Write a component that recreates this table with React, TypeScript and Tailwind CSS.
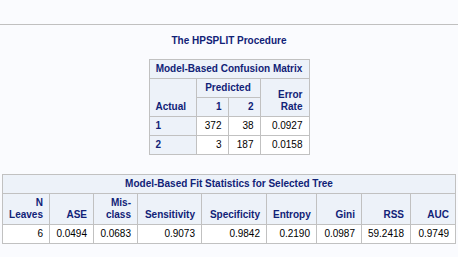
import React from 'react';

const hd = 'border border-[#c1c1c1] bg-[#edf2f9] text-[#112277] font-bold px-[6px] py-[3px] align-bottom';
const td = 'border border-[#c1c1c1] bg-white text-black px-[6px] py-[3px] text-right';

const fitCols = [
  { w: 47, label: ['N', 'Leaves'], v: '6' },
  { w: 44, label: ['ASE'], v: '0.0494' },
  { w: 44, label: ['Mis-', 'class'], v: '0.0683' },
  { w: 64, label: ['Sensitivity'], v: '0.9073' },
  { w: 65, label: ['Specificity'], v: '0.9842' },
  { w: 50, label: ['Entropy'], v: '0.2190' },
  { w: 45, label: ['Gini'], v: '0.0987' },
  { w: 49, label: ['RSS'], v: '59.2418' },
  { w: 45, label: ['AUC'], v: '0.9749' },
];

const App: React.FC = () => {
  return (
    <div className="min-h-screen bg-[#fafbfe] font-['Liberation_Sans',Arial,sans-serif] text-[10px] leading-[12px]">
      <div className="h-[24px]" />
      <div className="h-px bg-[#c0c0c0]" />

      <div className="mt-[10px] text-center font-bold text-[#112277]">The HPSPLIT Procedure</div>

      {/* confusion matrix */}
      <table className="mx-auto mt-[12px] w-[161px] border-collapse table-fixed">
        <colgroup>
          <col style={{ width: 47 }} />
          <col style={{ width: 32 }} />
          <col style={{ width: 32 }} />
          <col style={{ width: 49 }} />
        </colgroup>
        <thead>
          <tr>
            <th colSpan={4} className={`${hd} text-center whitespace-nowrap`}>Model-Based Confusion Matrix</th>
          </tr>
          <tr>
            <th rowSpan={2} className={`${hd} text-left`}>Actual</th>
            <th colSpan={2} className={`${hd} text-center`}>Predicted</th>
            <th rowSpan={2} className={`${hd} text-right`}>
              Error
              <br />
              Rate
            </th>
          </tr>
          <tr>
            <th className={`${hd} text-right`}>1</th>
            <th className={`${hd} text-right`}>2</th>
          </tr>
        </thead>
        <tbody>
          <tr>
            <th className={`${hd} text-left`}>1</th>
            <td className={td}>372</td>
            <td className={td}>38</td>
            <td className={td}>0.0927</td>
          </tr>
          <tr>
            <th className={`${hd} text-left`}>2</th>
            <td className={td}>3</td>
            <td className={td}>187</td>
            <td className={td}>0.0158</td>
          </tr>
        </tbody>
      </table>

      {/* fit statistics */}
      <table className="mx-auto mt-[19px] w-[454px] border-collapse table-fixed">
        <colgroup>
          {fitCols.map((c) => (
            <col key={c.v} style={{ width: c.w }} />
          ))}
        </colgroup>
        <thead>
          <tr>
            <th colSpan={9} className={`${hd} text-center`}>Model-Based Fit Statistics for Selected Tree</th>
          </tr>
          <tr>
            {fitCols.map((c) => (
              <th key={c.v} className={`${hd} text-right`}>
                {c.label.map((l, i) => (
                  <div key={i}>{l}</div>
                ))}
              </th>
            ))}
          </tr>
        </thead>
        <tbody>
          <tr>
            {fitCols.map((c) => (
              <td key={c.v} className={td}>{c.v}</td>
            ))}
          </tr>
        </tbody>
      </table>
    </div>
  );
};

export default App;
